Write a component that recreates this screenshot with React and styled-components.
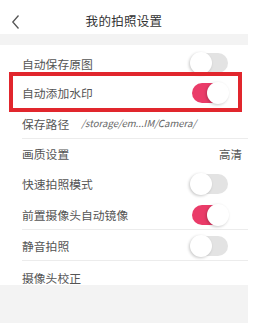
import React from "react"
import styled, { createGlobalStyle } from "styled-components"

const GlobalStyle = createGlobalStyle`
  html, body {
    margin: 0;
    padding: 0;
    background: #fff;
  }
  body {
    font-family: "Noto Sans CJK SC", "Noto Sans", sans-serif;
  }
`

const Page = styled.div`
  width: 258px;
  height: 326px;
  overflow: hidden;
  background: #fff;
`

const Screen = styled.div`
  width: 248px;
`

const Header = styled.div`
  height: 34px;
  position: relative;
  display: flex;
  align-items: center;
  justify-content: center;
  padding-top: 6px;
  box-sizing: border-box;

  .title {
    font-size: 12.5px;
    color: #333;
    letter-spacing: 0.3px;
  }
`

const BackButton = styled.div`
  position: absolute;
  left: 11px;
  top: 14px;
  width: 10px;
  height: 16px;
  display: flex;
`

const Band = styled.div`
  height: ${(p) => p.$h || 11}px;
  background: #f3f3f3;
`

const List = styled.div`
  padding-top: 3px;
`

const Row = styled.div`
  height: ${(p) => p.$h || 30}px;
  display: flex;
  align-items: ${(p) => (p.$top ? "flex-start" : "center")};
  padding: ${(p) => (p.$top ? "8px" : "0")} 20px 0 22px;
  box-sizing: border-box;
  position: relative;

  ${(p) =>
    p.$line &&
    `
    &::before {
      content: "";
      position: absolute;
      left: 22px;
      right: 0;
      bottom: 0;
      height: 1px;
      background: #ececec;
    }
  `}

  ${(p) =>
    p.$marked &&
    `
    &::after {
      content: "";
      position: absolute;
      left: 9px;
      top: -6px;
      width: 233px;
      height: 40px;
      box-sizing: border-box;
      border: 4.5px solid #e1262d;
    }
  `}
`

const Label = styled.span`
  font-size: 11.8px;
  color: #555;
  white-space: nowrap;
`

const Path = styled.span`
  font-size: 9.6px;
  color: #666;
  margin-left: 12px;
  font-style: italic;
  white-space: nowrap;
`

const Value = styled.span`
  margin-left: auto;
  margin-right: -14px;
  font-size: 11.5px;
  color: #555;
`

const Track = styled.div`
  margin-left: auto;
  width: 36px;
  height: 20px;
  border-radius: 10px;
  background: ${(p) => (p.$on ? "#ea3c69" : "#e3e3e3")};
  position: relative;
`

const Thumb = styled.div`
  position: absolute;
  top: -1px;
  ${(p) => (p.$on ? "right: -1px;" : "left: -2px;")}
  width: 22px;
  height: 22px;
  border-radius: 50%;
  background: #fff;
  box-shadow: -1px 1px 3px rgba(0, 0, 0, 0.22);
`

function Toggle({ on }) {
  return (
    <Track $on={on}>
      <Thumb $on={on} />
    </Track>
  )
}

export default function App() {
  return (
    <Page>
      <GlobalStyle />
      <Screen>
        <Header>
          <BackButton>
            <svg width="10" height="16" viewBox="0 0 10 16">
              <polyline
                points="7.5,1.5 1.8,8 7.5,14.5"
                fill="none"
                stroke="#555"
                strokeWidth="1.3"
              />
            </svg>
          </BackButton>
          <span className="title">我的拍照设置</span>
        </Header>
        <Band />
        <List>
          <Row>
            <Label>自动保存原图</Label>
            <Toggle />
          </Row>
          <Row $h={29} $marked>
            <Label>自动添加水印</Label>
            <Toggle on />
          </Row>
          <Row $h={32} $line>
            <Label>保存路径</Label>
            <Path>/storage/em...IM/Camera/</Path>
          </Row>
          <Row $h={29}>
            <Label>画质设置</Label>
            <Value>高清</Value>
          </Row>
          <Row $h={31}>
            <Label>快速拍照模式</Label>
            <Toggle />
          </Row>
          <Row $h={31} $line>
            <Label>前置摄像头自动镜像</Label>
            <Toggle on />
          </Row>
          <Row $h={31} $line>
            <Label>静音拍照</Label>
            <Toggle />
          </Row>
          <Row $h={24} $top>
            <Label>摄像头校正</Label>
          </Row>
        </List>
        <Band $h={38} />
      </Screen>
    </Page>
  )
}
